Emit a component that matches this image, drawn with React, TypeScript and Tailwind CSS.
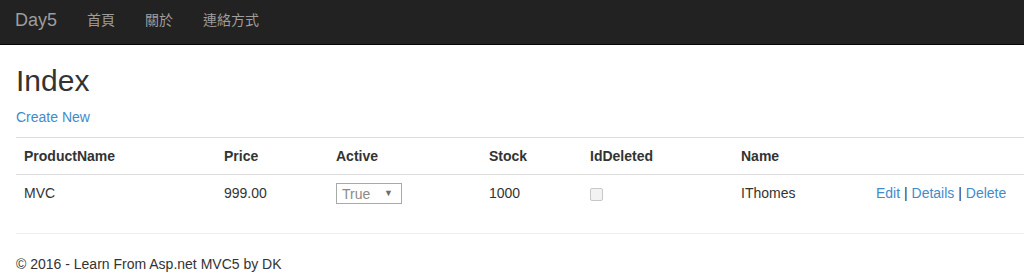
const font = "font-['Liberation_Sans','Noto_Sans_CJK_TC',sans-serif]"

const cols = [
  { label: 'ProductName', w: 'w-[200px]' },
  { label: 'Price', w: 'w-[112px]' },
  { label: 'Active', w: 'w-[153px]' },
  { label: 'Stock', w: 'w-[101px]' },
  { label: 'IdDeleted', w: 'w-[151px]' },
  { label: 'Name', w: 'w-[135px]' },
  { label: '', w: '' },
]

export default function App() {
  return (
    <div className={`${font} min-h-screen overflow-hidden bg-white text-[14px] leading-5 text-[#333]`}>
      {/* navbar (top 5px cropped off) */}
      <nav className="flex h-[45px] items-center border-b border-[#080808] bg-[#222] pb-[5px]">
        <a className="px-[15px] text-[18px] leading-5 text-[#9d9d9d]">Day5</a>
        <ul className="flex">
          {['首頁', '關於', '連絡方式'].map((l) => (
            <li key={l}>
              <a className="block px-[15px] text-[#9d9d9d]">{l}</a>
            </li>
          ))}
        </ul>
      </nav>

      <div className="pl-4">
        <h2 className="mt-[19px] mb-2.5 text-[30px] font-normal leading-[1.1]">Index</h2>
        <p className="mb-[10px]">
          <a className="text-[#428bca]">Create New</a>
        </p>

        <table className="mb-5 w-full table-fixed border-collapse">
          <tbody>
            <tr className="h-9">
              {cols.map((c, i) => (
                <th key={i} className={`${c.w} border-t border-[#ddd] p-2 text-left align-top font-bold`}>
                  {c.label}
                </th>
              ))}
            </tr>
            <tr className="h-[38px]">
              <td className="border-t border-[#ddd] p-2 align-top">MVC</td>
              <td className="border-t border-[#ddd] p-2 align-top">999.00</td>
              <td className="border-t border-[#ddd] p-2 align-top">
                <div className="flex h-[21px] w-[66px] items-center justify-between border border-[#a9a9a9] bg-white pl-[5px] pr-[8px] text-[#8a8a8a]">
                  <span className="leading-none">True</span>
                  <span className="text-[9px] leading-none text-[#6d6d6d]">▼</span>
                </div>
              </td>
              <td className="border-t border-[#ddd] p-2 align-top">1000</td>
              <td className="border-t border-[#ddd] p-2 align-top">
                <div className="mt-[5px] h-[13px] w-[13px] rounded-[2px] border border-[#c8c8c8] bg-[#f2f2f2]" />
              </td>
              <td className="border-t border-[#ddd] p-2 align-top">IThomes</td>
              <td className="border-t border-[#ddd] p-2 align-top whitespace-nowrap">
                <a className="text-[#428bca]">Edit</a> | <a className="text-[#428bca]">Details</a> |{' '}
                <a className="text-[#428bca]">Delete</a>
              </td>
            </tr>
          </tbody>
        </table>

        <hr className="mt-[19px] mb-5 border-t border-[#eee]" />
        <footer>
          <p>© 2016 - Learn From Asp.net MVC5 by DK</p>
        </footer>
      </div>
    </div>
  )
}
